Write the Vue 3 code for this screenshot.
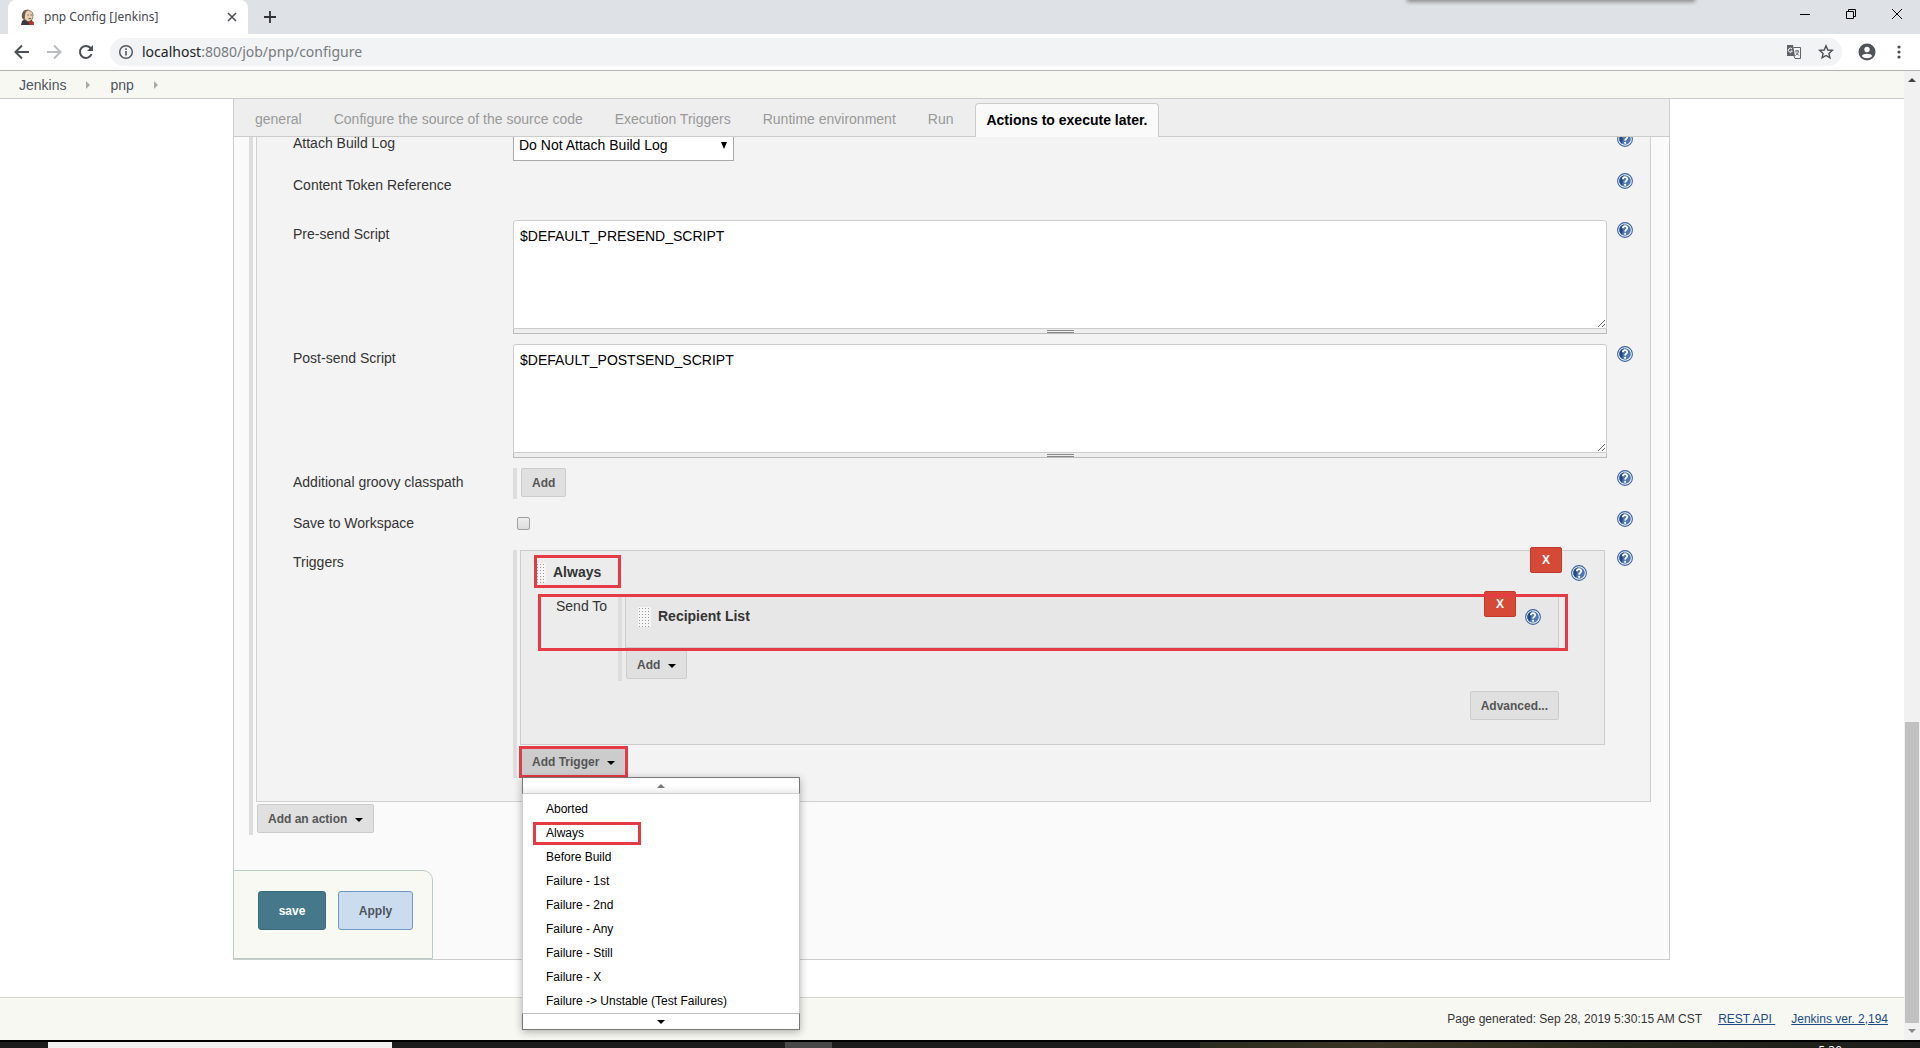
<script setup>
import { h, ref } from 'vue'

const tabs = ['general', 'Configure the source of the source code', 'Execution Triggers', 'Runtime environment', 'Run']
const preSend = ref('$DEFAULT_PRESEND_SCRIPT')
const postSend = ref('$DEFAULT_POSTSEND_SCRIPT')
const saveToWorkspace = ref(false)
const triggers = [
  'Aborted', 'Always', 'Before Build', 'Failure - 1st', 'Failure - 2nd',
  'Failure - Any', 'Failure - Still', 'Failure - X', 'Failure -> Unstable (Test Failures)',
]

const HelpIcon = () =>
  h('svg', { width: 16, height: 16, viewBox: '0 0 16 16', 'aria-hidden': 'true' }, [
    h('circle', { cx: 8, cy: 8, r: 7.4, fill: '#f4f8fd', stroke: '#3a62a0', 'stroke-width': 1.1 }),
    h('circle', { cx: 8, cy: 8, r: 5.8, fill: '#4d78b6' }),
    h('path', { d: 'M3 5A6 6 0 0 1 7 2.2L5 12.8A6 6 0 0 1 3 5z', fill: '#264a86' }),
    h('path', { d: 'M5.8 6.2C5.9 3.4 10.3 3.5 10.2 6.2C10.1 7.8 8.2 7.7 8.1 9.6', fill: 'none', stroke: '#fff', 'stroke-width': 1.8 }),
    h('circle', { cx: 8.1, cy: 11.8, r: 1.1, fill: '#fff' }),
  ])
const Caret = () =>
  h('svg', { width: 8, height: 4, viewBox: '0 0 8 4', 'aria-hidden': 'true' }, [h('path', { d: 'M0 0H8L4 4z', fill: '#000' })])
</script>

<template>
  <div class="window">
    <header class="tabstrip">
      <div class="browser-tab">
        <svg class="favicon" width="16" height="16" viewBox="0 0 16 16">
          <path d="M1 16L2 12L5 10L12 11L14 16z" fill="#3b3a40" />
          <path d="M3.500 6C3 0 13 0 13 6C13 10 11 12.500 8.500 12.500C6 12.500 4 10 3.500 6z" fill="#ecd0b0" stroke="#5a4a3e" stroke-width=".7" />
          <path d="M2 9C1 3 4 0 9 .5C6 1.500 5 4 5 7L4 11z" fill="#6b5c50" />
          <path d="M9 13L11 12L14 13L13.500 16H9z" fill="#b8332c" />
          <path d="M7.500 6h1.300M10.500 6h1.300M8.500 9.600h2.500" stroke="#6a5142" />
        </svg>
        <span class="tab-title">pnp Config [Jenkins]</span>
        <button class="bare" aria-label="Close tab">
          <svg width="10" height="10" viewBox="0 0 10 10"><path d="M1 1L9 9M9 1L1 9" stroke="#4a4d51" stroke-width="1.500" /></svg>
        </button>
      </div>
      <button class="bare new-tab" aria-label="New tab">
        <svg width="12" height="12" viewBox="0 0 12 12"><path d="M6 0V12M0 6H12" stroke="#303236" stroke-width="1.800" /></svg>
      </button>
      <div class="window-buttons">
        <button class="bare" aria-label="Minimize"><svg width="10" height="10" viewBox="0 0 10 10"><path d="M0 5.500H10" stroke="#000" /></svg></button>
        <button class="bare" aria-label="Restore"><svg width="10" height="10" viewBox="0 0 10 10"><path d="M.5 2.500H7.500V9.500H.5zM2.500 2.500V.5H9.500V7.500H7.500" fill="none" stroke="#000" /></svg></button>
        <button class="bare" aria-label="Close"><svg width="10" height="10" viewBox="0 0 10 10"><path d="M0 0L10 10M10 0L0 10" stroke="#000" /></svg></button>
      </div>
      <div class="top-shadow"></div>
    </header>

    <div class="toolbar">
      <button class="bare" aria-label="Back"><svg width="16" height="16" viewBox="0 0 16 16"><path d="M15 8H2M8 1.500L1.500 8L8 14.500" fill="none" stroke="#4b4e53" stroke-width="2" /></svg></button>
      <button class="bare" aria-label="Forward"><svg width="16" height="16" viewBox="0 0 16 16"><path d="M1 8H14M8 1.500L14.500 8L8 14.500" fill="none" stroke="#bcbec1" stroke-width="2" /></svg></button>
      <button class="bare" aria-label="Reload"><svg width="16" height="16" viewBox="0 0 16 16"><path d="M13.500 10.200A6 6 0 1 1 12.300 3.800L14 5.500" fill="none" stroke="#4b4e53" stroke-width="2" /><path d="M15 1V7H9z" fill="#4b4e53" /></svg></button>
      <div class="omnibox">
        <svg width="16" height="16" viewBox="0 0 16 16"><circle cx="8" cy="8" r="6.300" fill="none" stroke="#54575c" stroke-width="1.500" /><path d="M8 7V11.500M8 4.300V6" stroke="#54575c" stroke-width="1.600" /></svg>
        <span class="url"><b>localhost</b>:8080/job/pnp/configure</span>
        <button class="bare" aria-label="Translate"><svg width="16" height="16" viewBox="0 0 16 16"><path d="M1 1H7L9 12H1z" fill="#5f6368" /><path d="M7.500 3.500H14.500V14.500H9L8 12" fill="none" stroke="#5f6368" /><path d="M9 7H13M11 6V7M12.500 7C12 9.500 10.500 10.500 9.500 11.500M10 8.500L12.800 11.500" fill="none" stroke="#5f6368" /><path d="M6 5A2 2 0 1 0 6.300 7H4.700" fill="none" stroke="#fff" /></svg></button>
        <button class="bare star" aria-label="Bookmark"><svg width="16" height="16" viewBox="0 0 16 16"><path d="M8 1.800L9.800 6L14.300 6.400L10.900 9.400L11.900 13.900L8 11.500L4.100 13.900L5.100 9.400L1.700 6.400L6.200 6z" fill="none" stroke="#4b4e53" stroke-width="1.400" /></svg></button>
      </div>
      <button class="bare" aria-label="Profile"><svg width="18" height="18" viewBox="0 0 18 18"><circle cx="9" cy="9" r="8.500" fill="#505358" /><circle cx="9" cy="6.500" r="2.700" fill="#fff" /><path d="M3.800 13C5 10 13 10 14.200 13C12 16 6 16 3.800 13z" fill="#fff" /></svg></button>
      <button class="bare menu-dots" aria-label="Menu"><svg width="4" height="14" viewBox="0 0 4 14"><g fill="#4b4e53"><circle cx="2" cy="2" r="1.600" /><circle cx="2" cy="7" r="1.600" /><circle cx="2" cy="12" r="1.600" /></g></svg></button>
    </div>

    <div class="viewport">
      <div class="page">
        <nav class="breadcrumbs">
          <a href="#">Jenkins</a>
          <svg width="4" height="8" viewBox="0 0 4 8"><path d="M0 0L4 4L0 8z" fill="#aaa" /></svg>
          <a href="#">pnp</a>
          <svg width="4" height="8" viewBox="0 0 4 8"><path d="M0 0L4 4L0 8z" fill="#aaa" /></svg>
        </nav>

        <main class="config">
          <nav class="config-tabs">
            <a v-for="t in tabs" :key="t" href="#">{{ t }}</a>
            <a href="#" class="active">Actions to execute later.</a>
          </nav>

          <div class="config-body">
            <div class="hetero outer">
              <section class="action">
                <div class="row">
                  <label for="attach">Attach Build Log</label>
                  <div class="select-wrap">
                    <select id="attach"><option>Do Not Attach Build Log</option></select>
                    <svg width="6" height="7" viewBox="0 0 6 7"><path d="M0 0H6L3 7z" fill="#000" /></svg>
                  </div>
                  <button class="bare help" aria-label="Help"><HelpIcon /></button>
                </div>
                <div class="row token-row">
                  <span class="name">Content Token Reference</span>
                  <span></span>
                  <button class="bare help" aria-label="Help"><HelpIcon /></button>
                </div>
                <div class="row">
                  <label for="presend">Pre-send Script</label>
                  <div class="script">
                    <textarea id="presend" v-model="preSend" spellcheck="false"></textarea>
                    <div class="sizer"><i></i></div>
                  </div>
                  <button class="bare help" aria-label="Help"><HelpIcon /></button>
                </div>
                <div class="row">
                  <label for="postsend">Post-send Script</label>
                  <div class="script">
                    <textarea id="postsend" v-model="postSend" spellcheck="false"></textarea>
                    <div class="sizer"><i></i></div>
                  </div>
                  <button class="bare help" aria-label="Help"><HelpIcon /></button>
                </div>
                <div class="row">
                  <span class="name">Additional groovy classpath</span>
                  <div class="hetero"><button class="btn first">Add</button></div>
                  <button class="bare help" aria-label="Help"><HelpIcon /></button>
                </div>
                <div class="row check-row">
                  <label for="workspace">Save to Workspace</label>
                  <div><input id="workspace" v-model="saveToWorkspace" type="checkbox"></div>
                  <button class="bare help" aria-label="Help"><HelpIcon /></button>
                </div>
                <div class="row triggers-row">
                  <span class="name">Triggers</span>
                  <div class="hetero">
                    <div class="chunk trigger">
                      <div class="chunk-head">
                        <i class="grip"></i>
                        <strong>Always</strong>
                        <button class="delete">X</button>
                        <button class="bare" aria-label="Help"><HelpIcon /></button>
                        <span class="mark mark-title"></span>
                      </div>
                      <div class="send-to">
                        <span class="send-label">Send To</span>
                        <div class="hetero">
                          <div class="chunk recipient">
                            <div class="chunk-head">
                              <i class="grip"></i>
                              <strong>Recipient List</strong>
                              <button class="delete">X</button>
                              <button class="bare" aria-label="Help"><HelpIcon /></button>
                            </div>
                          </div>
                          <button class="btn">Add <Caret /></button>
                        </div>
                        <span class="mark mark-recipient"></span>
                      </div>
                      <div class="advanced"><button class="btn">Advanced...</button></div>
                    </div>
                    <div class="add-trigger">
                      <button class="btn pressed">Add Trigger <Caret /></button>
                      <span class="mark mark-button"></span>
                      <div class="menu">
                        <div class="scroll up"><svg width="8" height="4" viewBox="0 0 8 4"><path d="M0 4H8L4 0z" fill="#777" /></svg></div>
                        <ul>
                          <li v-for="t in triggers" :key="t">
                            <a href="#">{{ t }}</a>
                            <span v-if="t === 'Always'" class="mark mark-item"></span>
                          </li>
                        </ul>
                        <div class="scroll down"><Caret /></div>
                      </div>
                    </div>
                  </div>
                  <button class="bare help" aria-label="Help"><HelpIcon /></button>
                </div>
              </section>
              <button class="btn">Add an action <Caret /></button>
            </div>
            <div class="submit">
              <button class="save">save</button>
              <button class="apply">Apply</button>
            </div>
          </div>
        </main>

        <footer class="page-footer">
          <span>Page generated: Sep 28, 2019 5:30:15 AM CST</span>
          <a href="#">REST API&nbsp;</a>
          <a href="#">Jenkins ver. 2,194</a>
        </footer>
      </div>
      <div class="scrollbar">
        <svg width="8" height="4" viewBox="0 0 8 4"><path d="M0 4H8L4 0z" fill="#404040" /></svg>
        <div class="thumb"></div>
        <svg width="8" height="4" viewBox="0 0 8 4"><path d="M0 0H8L4 4z" fill="#8a8a8a" /></svg>
      </div>
    </div>

    <div class="taskbar">
      <div class="search"></div>
      <div class="task"></div>
      <div class="tray"><span>5:30</span></div>
    </div>
  </div>
</template>

<style>
body { margin: 0; background: #fff; }
</style>

<style scoped>
* { box-sizing: border-box; }
.window { min-height: 100vh; display: flex; flex-direction: column; font: 14px/17px "Liberation Sans", Arial, sans-serif; color: #333; overflow: hidden; }
a { color: inherit; text-decoration: none; }
svg { display: block; flex: none; }
.bare { border: 0; padding: 0; background: none; display: flex; flex: none; }

.tabstrip { position: relative; display: flex; height: 34px; padding-left: 8px; background: #dee1e6; }
.browser-tab { display: flex; align-items: center; width: 240px; padding: 0 11px 0 12px; background: #fff; border-radius: 8px 8px 0 0; }
.tab-title { flex: 1; margin-left: 8px; font: 12px/16px "Noto Sans", sans-serif; color: #45484d; }
.new-tab { align-self: center; margin-left: 16px; }
.window-buttons { display: flex; gap: 36px; margin: 9px 18px 0 auto; }
.top-shadow { position: absolute; top: -4px; right: 226px; width: 286px; height: 4px; box-shadow: 0 1px 4px 1px #888; }

.toolbar { display: flex; align-items: center; height: 37px; padding: 0 19px 0 14px; gap: 16px; border-bottom: 1px solid #b0b0b0; background: #fff; }
.omnibox { flex: 1; display: flex; align-items: center; height: 28px; padding: 0 8px; border-radius: 14px; background: #f1f3f4; }
.url { flex: 1; margin-left: 8px; font: 14px/20px "Noto Sans", sans-serif; color: #777b80; }
.url b { font-weight: 400; color: #202124; }
.star { margin-left: 16px; }
.menu-dots { margin-left: 5px; }

.viewport { flex: 1; display: flex; }
.page { flex: 1; min-width: 0; display: flex; flex-direction: column; }
.breadcrumbs { display: flex; align-items: center; height: 28px; padding: 1px 0 0 19px; gap: 20px; background: #f8f8f3; border-bottom: 1px solid #ccc; color: #4d545d; }
.config { flex: 1; margin: 0 234px 37px 233px; display: flex; flex-direction: column; }
.config-tabs { position: relative; z-index: 1; display: flex; align-items: flex-end; height: 38px; padding-left: 5px; background: #eee; border: 1px solid #ccc; border-top: 0; color: #999; }
.config-tabs a { padding: 0 16px; line-height: 34px; }
.config-tabs .active { margin: 0 0 -1px 6px; padding: 0 10px; border: 1px solid #ccc; border-bottom: 0; border-radius: 4px 4px 0 0; background: #fafafa; color: #000; font-weight: 700; line-height: 33px; }
.config-body { flex: 1; margin-top: -8px; padding: 0 18px 0 15px; background: #fafafa; border: 1px solid #ccc; border-top: 0; display: flex; flex-direction: column; align-items: stretch; }

.hetero { border-left: 4px solid #ddd; padding: 0 0 2px 3px; }
.action { border: 1px solid #d0d0d0; border-top: 0; background: #f3f3f3; padding: 0 17px 23px 36px; }
.row { display: grid; grid-template-columns: 220px minmax(0, 1fr) 26px; align-items: start; padding-bottom: 10px; }
.row > label, .row > .name { padding-top: 6px; }
.row > .help { justify-self: end; margin-top: 2px; }
.token-row { min-height: 49px; }
.check-row { min-height: 39px; }
.triggers-row { padding-bottom: 0; }
.triggers-row > .hetero { margin-top: 2px; }

.select-wrap { position: relative; width: 221px; }
select { appearance: none; width: 100%; height: 32px; padding: 0 5px; border: 1px solid #a9a9a9; border-radius: 0; background: #fff; color: #000; font: 14px/17px "Liberation Sans", Arial, sans-serif; }
.select-wrap svg { position: absolute; right: 7px; top: 13px; }
.script { display: flex; flex-direction: column; }
textarea { height: 109px; padding: 7px 6px; border: 1px solid #ccc; border-radius: 3px 3px 0 0; background: #fff; color: #000; font: 14px/17px "Liberation Sans", Arial, sans-serif; resize: vertical; }
.sizer { display: flex; justify-content: center; align-items: center; height: 5px; background: #eee; border: 1px solid #bbb; border-top: 0; }
.sizer i { width: 27px; height: 3px; border: solid #888; border-width: 1px 0; }
input[type="checkbox"] { appearance: none; display: block; width: 13px; height: 13px; margin: 8px 0 0 4px; border: 1px solid #a0a0a0; border-radius: 2px; background: linear-gradient(#eee, #ddd); }

.btn { display: flex; align-items: center; gap: 8px; height: 29px; margin: 2px 0 0 1px; padding: 0 10px; border: 1px solid #ccc; border-radius: 2px; background: #e0e0e0; color: #555; font: bold 12px/16px "Liberation Sans", Arial, sans-serif; }
.btn svg { margin-top: 3px; }
.btn.first { margin-top: 0; }
.btn.pressed { background: #ccc; }

.chunk { border: 1px solid #ccc; background: #ececec; }
.trigger { margin-right: 2px; padding-bottom: 24px; }
.recipient { background: #e7e7e7; padding-bottom: 9px; }
.chunk-head { position: relative; display: flex; align-items: flex-start; height: 43px; padding: 0 17px 0 12px; }
.grip { width: 13px; height: 20px; margin-top: 12px; background: radial-gradient(circle, #999 1px, transparent 1px) 0 0 / 3px 3px #f6f6f6; }
.chunk-head strong { flex: 1; margin: 13px 0 0 7px; }
.chunk-head .bare { margin: 14px 0 0 9px; }
.delete { width: 32px; height: 26px; margin-top: -4px; padding: 0; border: 1px solid #c0392b; border-radius: 2px; background: #d64937; color: #fff; font: bold 12px/16px "Liberation Sans", Arial, sans-serif; }
.send-to { position: relative; display: grid; grid-template-columns: 62px minmax(0, 1fr); margin: 0 45px 0 35px; }
.send-label { padding-top: 4px; }
.advanced { display: flex; justify-content: flex-end; margin: 8px 45px 0 0; }

/* Highlight frames lie over the controls they point out */
.mark { position: absolute; border: 3px solid #e63b44; pointer-events: none; }
.mark-title { left: 13px; top: 4px; width: 87px; height: 33px; }
.mark-recipient { inset: 0 -9px auto -18px; height: 57px; }
.mark-button { left: -1px; top: -1px; width: 109px; height: 32px; }
.mark-item { left: 10px; top: 1px; width: 108px; height: 23px; }

.add-trigger { position: relative; z-index: 2; }
.menu { position: absolute; top: 30px; left: 2px; width: 278px; font-size: 12px; color: #000; box-shadow: 0 2px 8px rgba(0, 0, 0, .3); background: #fff; }
.menu ul { margin: 0; padding: 3px 0 0; list-style: none; border: 1px solid #ccc; border-width: 0 1px; }
.menu li { position: relative; line-height: 24px; padding-left: 23px; }
.scroll { display: flex; justify-content: center; align-items: center; height: 17px; border: 1px solid #777; }
.up { border-bottom-color: #ccc; background: linear-gradient(#fff 50%, #eee); }
.down { border-top-color: #bbb; }

.submit { align-self: flex-start; display: flex; gap: 12px; margin: 35px 0 0 -16px; padding: 20px 19px 28px 24px; border: 1px solid #bacdc4; border-radius: 0 10px 0 0; background: #f8f9f3; }
.submit button { height: 39px; border-radius: 3px; font: bold 12px/16px "Liberation Sans", Arial, sans-serif; }
.save { width: 68px; border: 1px solid #3a6a79; background: #44788a; color: #fff; }
.apply { width: 75px; border: 1px solid #6f97c4; background: #cbdcee; color: #4d545d; }

.page-footer { display: flex; justify-content: flex-end; align-items: center; height: 43px; padding-right: 16px; gap: 16px; border-top: 1px solid #d3d7cf; background: #f8f8f3; font-size: 12px; }
.page-footer a { color: #204a87; text-decoration: underline; }

.scrollbar { width: 16px; display: flex; flex-direction: column; align-items: center; padding: 7px 0; background: #f1f1f1; }
.thumb { width: 14px; height: 301px; margin: auto 0 6px; background: #c1c1c1; }

.taskbar { display: flex; height: 9px; overflow: hidden; border-top: 2px solid #000; padding-left: 48px; background: #1c1c1c; }
.search { width: 344px; background: #f1f1f1; }
.task { width: 47px; margin-left: 393px; background: #484848; }
.tray { flex: 1; margin-left: 368px; background: linear-gradient(90deg, #2a2c1e, #3a3524 25%, #26281c 60%, #1c1c1c); text-align: right; }
.tray span { display: block; margin: 2px 78px 0 0; color: #fff; font: 12px/14px "Open Sans", sans-serif; }
</style>
